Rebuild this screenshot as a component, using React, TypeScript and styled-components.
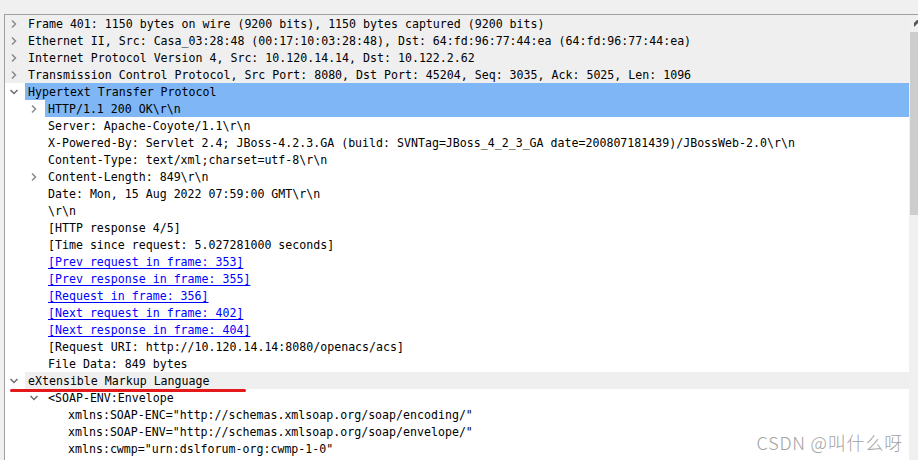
import React from "react";
import styled, { createGlobalStyle, css } from "styled-components";

const GlobalStyle = createGlobalStyle`
	html, body {
		margin: 0;
		padding: 0;
		background: #f0f0f0;
		overflow: hidden;
	}
`;

const Window = styled.div`
	position: relative;
	width: 918px;
	height: 460px;
	padding: 14px 0 0 4px;
	box-sizing: border-box;
	background: #f0f0f0;
	overflow: hidden;
`;

const Pane = styled.div`
	display: flex;
	height: 445px;
	border-top: 1px solid #a0a0a0;
	border-left: 1px solid #a0a0a0;
	border-bottom: 1px solid #a0a0a0;
	background: #ffffff;
`;

const Tree = styled.div`
	flex: 0 0 904px;
	display: flex;
	flex-direction: column;
	font-family: "DejaVu Sans Mono", "Liberation Mono", monospace;
	font-size: 11.6px;
	color: #000;
	overflow: hidden;
`;

const ScrollBar = styled.div`
	flex: 0 0 17px;
	display: flex;
	flex-direction: column;
	background: #f0f0f0;
`;

const ScrollArrow = styled.div`
	height: 17px;
	display: flex;
	align-items: center;
	padding-left: 5px;
`;

const Thumb = styled.div`
	height: 183px;
	margin-left: 1px;
	background: #cdcdcd;
`;

const Row = styled.div<{ $level: number; $shade: boolean }>`
	display: flex;
	flex: 0 0 17px;
	padding-left: ${(p) => p.$level * 20}px;
	white-space: pre;
	${(p) =>
		p.$shade &&
		css`
			background: #efefef;
		`}
`;

const Toggle = styled.span`
	flex: 0 0 20px;
	display: flex;
	align-items: center;
	justify-content: center;
	padding: 1px 3px 0 0;
	box-sizing: border-box;
`;

const Label = styled.span<{ $selected?: boolean; $shade?: boolean }>`
	flex: 1;
	height: 17px;
	box-sizing: border-box;
	padding: 1px 0 0 3px;
	line-height: 17px;
	${(p) =>
		p.$shade &&
		css`
			background: #efefef;
		`}
	${(p) =>
		p.$selected &&
		css`
			background: #7eb6f6;
		`}
`;

const Link = styled.span`
	color: #0000ff;
	text-decoration: underline;
	text-underline-offset: 2px;
`;

const Marker = styled.div`
	position: absolute;
	left: 10px;
	top: 389px;
	width: 236px;
	height: 3px;
	border-radius: 2px;
	background: #e3191c;
`;

const Watermark = styled.div`
	position: absolute;
	right: 15px;
	top: 429px;
	font-family: "Noto Sans CJK SC", "Noto Sans", sans-serif;
	font-size: 18px;
	font-weight: 300;
	color: #a2a2a2;
	letter-spacing: 0.8px;
`;

const Chevron = ({ open }: { open: boolean }) =>
	open ? (
		<svg width="10" height="8" viewBox="0 0 10 8">
			<path d="M1.5 2 L5 5.5 L8.5 2" fill="none" stroke="#6d6d6d" strokeWidth="1.5" />
		</svg>
	) : (
		<svg width="8" height="10" viewBox="0 0 8 10">
			<path d="M2 1.5 L5.5 5 L2 8.5" fill="none" stroke="#8a8a8a" strokeWidth="1.5" />
		</svg>
	);

type Item = {
	text: React.ReactNode;
	level: number;
	toggle?: "open" | "closed";
	shade?: "full" | "label";
	selected?: boolean;
};

const items: Item[] = [
	{ level: 0, toggle: "closed", shade: "full", text: "Frame 401: 1150 bytes on wire (9200 bits), 1150 bytes captured (9200 bits)" },
	{ level: 0, toggle: "closed", shade: "full", text: "Ethernet II, Src: Casa_03:28:48 (00:17:10:03:28:48), Dst: 64:fd:96:77:44:ea (64:fd:96:77:44:ea)" },
	{ level: 0, toggle: "closed", shade: "full", text: "Internet Protocol Version 4, Src: 10.120.14.14, Dst: 10.122.2.62" },
	{ level: 0, toggle: "closed", shade: "full", text: "Transmission Control Protocol, Src Port: 8080, Dst Port: 45204, Seq: 3035, Ack: 5025, Len: 1096" },
	{ level: 0, toggle: "open", selected: true, text: "Hypertext Transfer Protocol" },
	{ level: 1, toggle: "closed", selected: true, text: "HTTP/1.1 200 OK\\r\\n" },
	{ level: 1, text: "Server: Apache-Coyote/1.1\\r\\n" },
	{ level: 1, text: "X-Powered-By: Servlet 2.4; JBoss-4.2.3.GA (build: SVNTag=JBoss_4_2_3_GA date=200807181439)/JBossWeb-2.0\\r\\n" },
	{ level: 1, text: "Content-Type: text/xml;charset=utf-8\\r\\n" },
	{ level: 1, toggle: "closed", text: "Content-Length: 849\\r\\n" },
	{ level: 1, text: "Date: Mon, 15 Aug 2022 07:59:00 GMT\\r\\n" },
	{ level: 1, text: "\\r\\n" },
	{ level: 1, text: "[HTTP response 4/5]" },
	{ level: 1, text: "[Time since request: 5.027281000 seconds]" },
	{ level: 1, text: <Link>[Prev request in frame: 353]</Link> },
	{ level: 1, text: <Link>[Prev response in frame: 355]</Link> },
	{ level: 1, text: <Link>[Request in frame: 356]</Link> },
	{ level: 1, text: <Link>[Next request in frame: 402]</Link> },
	{ level: 1, text: <Link>[Next response in frame: 404]</Link> },
	{ level: 1, text: "[Request URI: http://10.120.14.14:8080/openacs/acs]" },
	{ level: 1, text: "File Data: 849 bytes" },
	{ level: 0, toggle: "open", shade: "label", text: "eXtensible Markup Language" },
	{ level: 1, toggle: "open", text: "<SOAP-ENV:Envelope" },
	{ level: 2, text: 'xmlns:SOAP-ENC="http://schemas.xmlsoap.org/soap/encoding/"' },
	{ level: 2, text: 'xmlns:SOAP-ENV="http://schemas.xmlsoap.org/soap/envelope/"' },
	{ level: 2, text: 'xmlns:cwmp="urn:dslforum-org:cwmp-1-0"' },
];

const App = () => {
	return (
		<Window>
			<GlobalStyle />
			<Pane>
				<Tree>
					{items.map((item, i) => (
						<Row key={i} $level={item.level} $shade={item.shade === "full"}>
							<Toggle>{item.toggle && <Chevron open={item.toggle === "open"} />}</Toggle>
							<Label $selected={item.selected} $shade={item.shade === "label"}>
								{item.text}
							</Label>
						</Row>
					))}
				</Tree>
				<ScrollBar>
					<ScrollArrow>
						<svg width="7" height="7" viewBox="0 0 7 7">
							<path d="M0 7 L0 3 L3 0 L7 0 Z" fill="#555" />
						</svg>
					</ScrollArrow>
					<Thumb />
				</ScrollBar>
			</Pane>
			<Marker />
			<Watermark>CSDN @叫什么呀</Watermark>
		</Window>
	);
};

export default App;
